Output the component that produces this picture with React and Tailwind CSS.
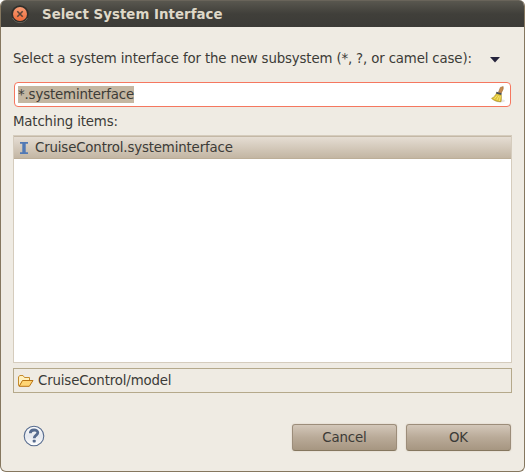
function CloseIcon() {
  return (
    <svg width="18" height="18" viewBox="0 0 18 18" className="block">
      <defs>
        <linearGradient id="closeFill" x1="0" y1="0" x2="0" y2="1">
          <stop offset="0" stopColor="#f79b74" />
          <stop offset="1" stopColor="#ee6b3a" />
        </linearGradient>
      </defs>
      <circle cx="9" cy="9" r="8.7" fill="#2f2e2a" />
      <path d="M1.5 13a8.4 8.4 0 0 0 15 0" fill="none" stroke="#68665f" strokeWidth="0.9" />
      <circle cx="9" cy="9" r="7" fill="url(#closeFill)" />
      <path d="M6.3 6.3l5.4 5.4M11.7 6.3l-5.4 5.4" stroke="#5b4438" strokeWidth="1.6" />
    </svg>
  );
}

function BroomIcon() {
  return (
    <svg width="16" height="17" viewBox="0 0 16 17" className="block">
      <ellipse cx="10" cy="14.8" rx="5" ry="1.6" fill="#e6e6e6" />
      <path d="M10.4 1.4 L13.2 .6 L13.2 3 L11.2 7.2 L8.5 6.3 Z" fill="#c58a4e" stroke="#a06c36" strokeWidth=".6" />
      <path d="M6.5 7.2 L11.2 8.6 C11.3 11 11.5 13 11 15.7 C8.1 15.8 4.1 14.8 1.6 12.4 C4 11.2 5.6 9.4 6.5 7.2Z" fill="#e0c538" stroke="#a58b1e" strokeWidth=".7" />
      <path d="M7.2 9.5L4.4 12.8M8.9 9.8L6.8 14M10.3 10L9.4 15" stroke="#fbe97c" strokeWidth=".8" />
      <path d="M6.2 6.7 L11.5 8.1" stroke="#4a4f55" strokeWidth="1.8" />
    </svg>
  );
}

function FolderIcon() {
  return (
    <svg width="16" height="12" viewBox="0 0 16 12" className="block">
      <path d="M.5 10.5V2L1.7.5H5L6.5 2.5H11.5V5.5H5L1.5 11Z" fill="#fff0bd" stroke="#c58b2c" />
      <path d="M1.2 11.3L4.5 5.5H15L11.3 11.3Z" fill="#ffd574" stroke="#b97414" strokeLinejoin="round" />
    </svg>
  );
}

function HelpIcon() {
  return (
    <svg width="22" height="22" viewBox="0 0 22 22" className="block">
      <defs>
        <linearGradient id="helpFill" x1="0" y1="0" x2="0" y2="1">
          <stop offset="0" stopColor="#fff" />
          <stop offset="0.5" stopColor="#e5e8ee" />
          <stop offset="1" stopColor="#fff" />
        </linearGradient>
      </defs>
      <circle cx="11" cy="11" r="9.8" fill="url(#helpFill)" stroke="#566b8e" strokeWidth="1.1" />
      <path d="M7.3 8.2C7.3 4 14.9 4 14.8 7.8C14.7 10.1 11.3 10.2 11.2 13.3" fill="none" stroke="#566b8e" strokeWidth="2.8" />
      <rect x="9.7" y="14.8" width="3" height="2.8" rx=".8" fill="#566b8e" />
    </svg>
  );
}

function Button({ children }) {
  return (
    <button className="h-[27px] w-[105px] rounded-[3px] border border-[#9c8d7a] border-b-[#85775f] bg-linear-to-b from-[#d3c7b9] via-[#b9aa98] to-[#a69681] text-center leading-[25px] shadow-[0_0_1px_1px_#e8e2d8]">
      {children}
    </button>
  );
}

export default function App() {
  return (
    <div className="h-[472px] w-[525px] overflow-hidden bg-white font-['DejaVu_Sans',sans-serif] text-[13.33px] tracking-[-0.15px] text-[#3c3b37]">
      <div className="flex h-[472px] w-[525px] flex-col overflow-hidden rounded-[6px] border border-t-0 border-[#85775f] bg-[#efebe3]">
        <header className="flex h-[27px] shrink-0 items-center border-t border-[#69645a] bg-linear-to-b from-[#59574f] via-[#403f3a] to-[#3c3b37] pl-[10px]">
          <CloseIcon />
          <h1 className="ml-[13px] whitespace-nowrap pt-[2px] text-[13.33px] font-bold leading-4 tracking-[0.05px] text-[#dfd8c8]">Select System Interface</h1>
        </header>
        <main className="flex flex-1 flex-col px-3">
          <div className="mt-[24px] flex h-4 items-center">
            <label className="whitespace-nowrap leading-4">Select a system interface for the new subsystem (*, ?, or camel case):</label>
            <svg width="10" height="6" viewBox="0 0 10 6" className="ml-auto mr-3 mt-[2px]">
              <path d="M0 0H10L5 5.5Z" fill="#25233c" />
            </svg>
          </div>
          <div className="ml-px mt-[15px] flex h-[25px] w-[497px] items-center rounded-[4px] border border-[#f5775f] bg-white pl-[3px] pr-1">
            <span className="h-[17px] bg-[#c4b7a2] leading-[17px]">*.systeminterface</span>
            <div className="ml-auto"><BroomIcon /></div>
          </div>
          <div className="mt-[7px] h-4 leading-4">Matching items:</div>
          <div className="mt-[5px] h-[228px] border border-[#d5ccbd] bg-white">
            <div className="flex h-[23px] items-center border-y border-t-[#c4b8a6] border-b-[#bcae98] bg-linear-to-b from-[#e5ddd3] to-[#c3b6a3] pl-[6px]">
              <svg width="8" height="12" viewBox="0 0 8 12" className="mt-px">
                <path d="M0 0H8V1.8H5.7V10.2H8V12H0V10.2H2.3V1.8H0Z" fill="#5179b5" />
              </svg>
              <span className="ml-[7px] leading-4">CruiseControl.systeminterface</span>
            </div>
          </div>
          <div className="mt-[5px] flex h-[25px] items-center border border-[#b5a98b] pl-1">
            <FolderIcon />
            <span className="ml-1 leading-4">CruiseControl/model</span>
          </div>
          <footer className="mt-[31px] flex items-start">
            <div className="ml-[10px] mt-px"><HelpIcon /></div>
            <div className="ml-auto mr-px flex gap-[9px]">
              <Button>Cancel</Button>
              <Button>OK</Button>
            </div>
          </footer>
        </main>
      </div>
    </div>
  );
}
